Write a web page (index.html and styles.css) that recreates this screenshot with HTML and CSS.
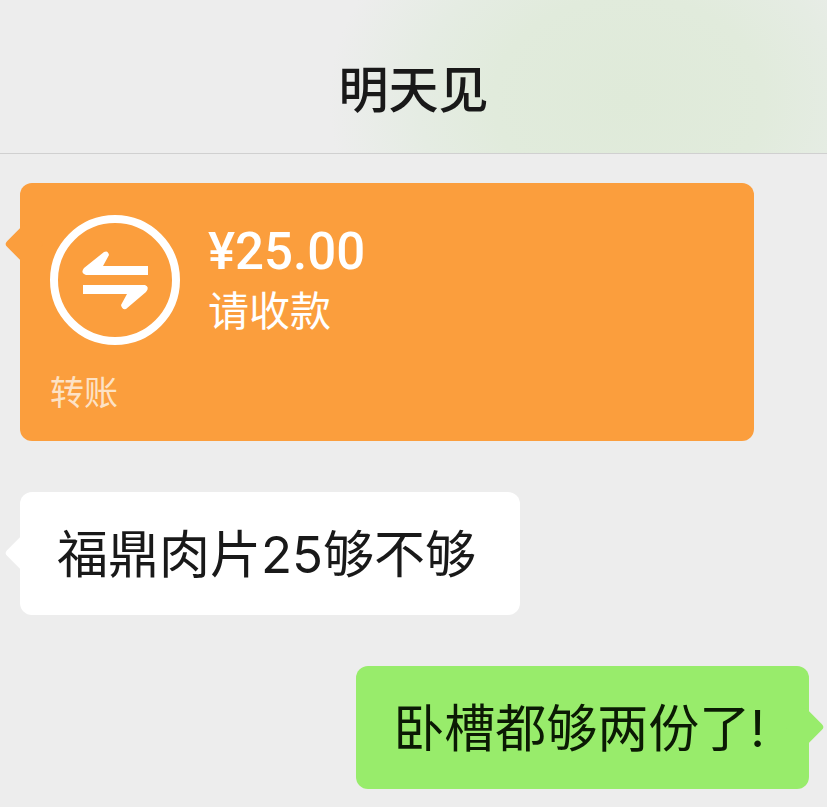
FILE: index.html
```html
<!DOCTYPE html>
<html lang="zh-CN">
    <head>
        <title>明天见</title>
        <meta charset="utf-8">
        <meta name="viewport" content="width=device-width, initial-scale=1">
        <link rel="stylesheet" href="styles.css">
    </head>
    <body>
        <header class="header">
            <h1>明天见</h1>
        </header>
        <main class="chat">
            <div class="bubble transfer">
                <div class="transfer-main">
                    <svg class="icon" viewBox="0 0 130 130" aria-hidden="true">
                        <circle cx="65" cy="65" r="61" fill="none" stroke="#fff" stroke-width="8"/>
                        <path d="M98 51 V60 H36 Q30 58 34 53 L54 37 Q58 35 59 40 L53 51 Z" fill="#fff"/>
                        <path d="M33 79 V70 H95 Q100 72 96 77 L76 94 Q72 95 71 90 L77 79 Z" fill="#fff"/>
                    </svg>
                    <div>
                        <div class="amount">¥25.00</div>
                        <div class="status">请收款</div>
                    </div>
                </div>
                <div class="label">转账</div>
            </div>
            <div class="bubble message">福鼎肉片25够不够</div>
            <div class="bubble message mine">卧槽都够两份了!</div>
        </main>
    </body>
</html>
```

FILE: styles.css
```css
* {
    box-sizing: border-box;
}

body {
    margin: 0;
    color: #191919;
    background-color: #ededed;
    font-family: Inter, "Noto Sans CJK SC", sans-serif;
}

.header {
    padding: 54px 0 27px;
    text-align: center;
    border-bottom: 1px solid #d0d0d0;
    background: radial-gradient(ellipse 300px 230px at 76% 65%, #dfead9 0%, #e1ebdc 45%, #e5ece3 70%, #ededed 100%);
}

.header h1 {
    margin: 0;
    font-size: 50px;
    font-weight: 500;
    line-height: 72px;
}

.chat {
    display: flex;
    flex-direction: column;
    align-items: flex-start;
    gap: 51px;
    padding: 29px 18px 18px 20px;
}

.bubble {
    position: relative;
    border-radius: 12px;
}

/* bubble tail */
.bubble::before {
    content: "";
    position: absolute;
    top: 47px;
    left: -10px;
    width: 28px;
    height: 28px;
    border-radius: 4px;
    background-color: inherit;
    transform: rotate(45deg);
}

.transfer {
    width: 93%;
    padding: 32px 30px 24px;
    color: #fff;
    background-color: #fb9e3d;
}

.transfer-main {
    display: flex;
    gap: 28px;
}

.icon {
    width: 130px;
    height: 130px;
}

.amount {
    margin-top: 8px;
    font-family: Roboto, sans-serif;
    font-size: 51px;
    font-weight: 500;
    line-height: 58px;
}

.status {
    font-size: 41px;
    line-height: 60px;
}

.label {
    margin-top: 24px;
    color: #fde2c5;
    font-size: 34px;
    line-height: 48px;
}

.message {
    padding: 27px 44px 24px 37px;
    background-color: #fff;
    font-size: 51px;
    line-height: 72px;
}

.mine {
    align-self: flex-end;
    color: #0b1a04;
    background-color: #98ec6b;
}

.mine::before {
    left: auto;
    right: -10px;
}
```
